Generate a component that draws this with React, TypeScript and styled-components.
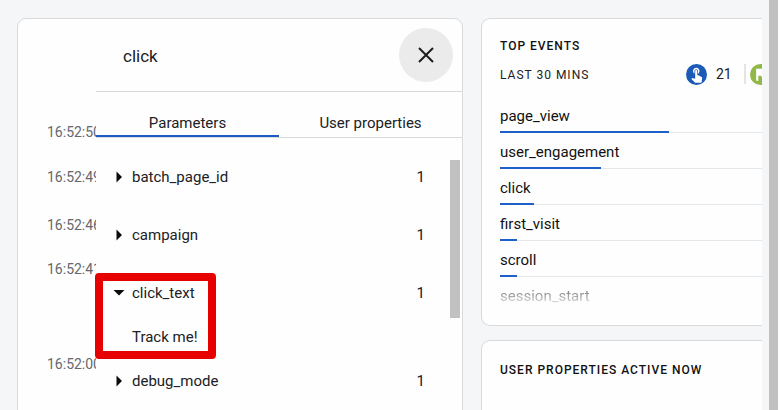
import React from "react";
import styled, { createGlobalStyle, css } from "styled-components";

const GlobalStyle = createGlobalStyle`
  *, *::before, *::after { box-sizing: border-box; }
  body {
    margin: 0;
    background: #f5f6f8;
    color: #202124;
    font-family: Roboto, "Liberation Sans", sans-serif;
    font-size: 14px;
    line-height: 20px;
  }
  button { font: inherit; color: inherit; background: none; border: 0; padding: 0; cursor: pointer; }
  h2, h3, p, ul, ol { margin: 0; padding: 0; font: inherit; list-style: none; }
`;

const Page = styled.div`
  display: flex;
  height: 100vh;
  overflow: hidden;
`;

const Columns = styled.main`
  flex: 1;
  min-width: 0;
  display: grid;
  grid-template-columns: 446fr 281fr;
  gap: 18px;
  padding: 18px 7px 0 17px;
`;

const PageScrollbar = styled.div`
  flex: none;
  width: 11px;
  background: #fdfdfd;
  border-left: 9px solid #c0c0c0;
`;

const Card = styled.section`
  background: #fefefe;
  border: 1px solid #d9dadc;
  border-radius: 9px;
`;

const StreamCard = styled(Card)`
  display: flex;
  min-width: 0;
  height: 100vh;
`;

const Timeline = styled.ol`
  flex: none;
  width: 78px;
  padding: 103px 0 0 29px;
  overflow: hidden;
  display: grid;
  grid-template-rows: 45px 48px 44px 95px 44px;
  align-content: start;
  color: #65686c;
  white-space: nowrap;
`;

const Drawer = styled.div`
  flex: 1;
  min-width: 0;
`;

const DrawerHeader = styled.header`
  display: flex;
  align-items: center;
  justify-content: space-between;
  height: 73px;
  padding: 0 9px 0 27px;
  border-bottom: 1px solid #d9dadc;
`;

const DrawerTitle = styled.h2`
  padding-top: 2px;
  font-size: 17px;
  line-height: 24px;
`;

const CloseButton = styled.button`
  display: grid;
  place-items: center;
  width: 54px;
  height: 54px;
  border-radius: 50%;
  background: #ebebeb;
`;

const Tabs = styled.div`
  display: grid;
  grid-template-columns: 1fr 1fr;
  height: 46px;
  border-bottom: 1px solid #d9dadc;
`;

const Tab = styled.button<{ $active?: boolean }>`
  height: 45px;
  padding-top: 18px;
  font-size: 15px;
  border-bottom: 2px solid transparent;
  ${(p) => p.$active && css`border-bottom-color: #1c5ac4;`}
`;

const DrawerBody = styled.div`
  display: flex;
  align-items: flex-start;
`;

const ParamList = styled.ul`
  flex: 1;
  padding-top: 10px;
  font-size: 15px;
`;

const Param = styled.li`
  position: relative;
`;

const ParamRow = styled.button`
  display: flex;
  align-items: center;
  width: 100%;
  height: 58px;
  padding: 0 25px 0 17px;
  text-align: left;
`;

const ParamName = styled.span`
  flex: 1;
  padding-left: 7px;
`;

const ParamValue = styled.p`
  padding: 5px 0 5px 36px;
`;

const Highlight = styled.div`
  position: absolute;
  left: -1px;
  top: 9px;
  width: 121px;
  height: 86px;
  border: 8px solid #e60000;
  border-radius: 4px;
  pointer-events: none;
`;

const DrawerScrollbar = styled.div`
  flex: none;
  width: 10px;
  height: 158px;
  margin: 22px 2px 0 0;
  background: #c1c1c1;
`;

const SideColumn = styled.div`
  display: flex;
  flex-direction: column;
  gap: 14px;
  min-width: 0;
  height: 100vh;
  overflow: hidden;
`;

const SideCard = styled(Card)`
  flex: none;
  border-right: 0;
  border-radius: 9px 0 0 9px;
  padding: 17px 0 0 18px;
  overflow: hidden;
`;

const EventsCard = styled(SideCard)`
  padding-bottom: 12px;
`;

const PropertiesCard = styled(SideCard)`
  flex: 1;
  padding-top: 19px;
`;

const CardTitle = styled.h3`
  font-size: 12px;
  font-weight: 500;
  letter-spacing: 1px;
  color: #111;
`;

const Summary = styled.div`
  display: flex;
  align-items: center;
  height: 20px;
  margin-top: 8px;
  white-space: nowrap;
`;

const SummaryLabel = styled.p`
  flex: 0 0 186px;
  padding-top: 2px;
  font-size: 12px;
  letter-spacing: 1px;
`;

const SummaryCount = styled.span`
  padding: 0 12px 0 9px;
  border-right: 2px solid #e3e4e6;
  margin-right: 4px;
`;

const Badge = styled.svg`
  flex: none;
  width: 21px;
  height: 21px;
`;

const EventList = styled.ul`
  width: 355px;
  padding-top: 13px;
  font-size: 15px;
  color: #111;
`;

const EventRow = styled.li<{ $faded?: boolean }>`
  height: 36px;
  padding-top: 9px;
  ${(p) =>
    p.$faded &&
    css`
      color: transparent;
      background: linear-gradient(#777 12px, #aaa 20px, #f0f0f0 28px);
      background-clip: text;
    `}
`;

const EventTrack = styled.div`
  height: 2px;
  margin-top: 5px;
  background: linear-gradient(transparent 1px, #e6e7e9 1px);
`;

const EventBar = styled.div`
  height: 2px;
  background: #1f5fc9;
`;

const times = ["16:52:50", "16:52:49", "16:52:46", "16:52:41", "16:52:00"];

const params: { name: string; count: number; value?: string }[] = [
  { name: "batch_page_id", count: 1 },
  { name: "campaign", count: 1 },
  { name: "click_text", count: 1, value: "Track me!" },
  { name: "debug_mode", count: 1 },
];

const events = [
  { name: "page_view", count: 10 },
  { name: "user_engagement", count: 6 },
  { name: "click", count: 2 },
  { name: "first_visit", count: 1 },
  { name: "scroll", count: 1 },
];
const totalEvents = 21;

const Arrow = ({ open }: { open: boolean }) => (
  <svg width="12" height="12" viewBox="0 0 12 12" aria-hidden="true">
    <path d={open ? "M0.5 3h11L6 8.500Z" : "M3.500 0.500v11L9 6Z"} fill="#0c0c0c" />
  </svg>
);

export default function App() {
  return (
    <>
      <GlobalStyle />
      <Page>
        <Columns>
          <StreamCard>
            <Timeline>
              {times.map((t) => (
                <li key={t}>{t}</li>
              ))}
            </Timeline>
            <Drawer>
              <DrawerHeader>
                <DrawerTitle>click</DrawerTitle>
                <CloseButton aria-label="Close">
                  <svg width="16" height="16" viewBox="0 0 16 16" aria-hidden="true">
                    <path d="M1 1l14 14M15 1L1 15" stroke="#1d1d1d" strokeWidth="2" />
                  </svg>
                </CloseButton>
              </DrawerHeader>
              <Tabs role="tablist">
                <Tab role="tab" aria-selected="true" $active>Parameters</Tab>
                <Tab role="tab" aria-selected="false">User properties</Tab>
              </Tabs>
              <DrawerBody>
                <ParamList>
                  {params.map((p) => (
                    <Param key={p.name}>
                      <ParamRow aria-expanded={!!p.value}>
                        <Arrow open={!!p.value} />
                        <ParamName>{p.name}</ParamName>
                        <span>{p.count}</span>
                      </ParamRow>
                      {p.value && <ParamValue>{p.value}</ParamValue>}
                      {p.value && <Highlight />}
                    </Param>
                  ))}
                </ParamList>
                <DrawerScrollbar />
              </DrawerBody>
            </Drawer>
          </StreamCard>
          <SideColumn>
            <EventsCard>
              <CardTitle>TOP EVENTS</CardTitle>
              <Summary>
                <SummaryLabel>LAST 30 MINS</SummaryLabel>
                <Badge viewBox="0 0 24 24" role="img" aria-label="Events">
                  <circle cx="12" cy="12" r="12" fill="#1c5ab8" />
                  <g transform="translate(2.300 1.800) scale(0.820)" fill="#fff">
                    <path d="M9 11.240V7.500C9 6.120 10.120 5 11.500 5S14 6.120 14 7.500v3.740c1.210-.810 2-2.180 2-3.740C16 5.010 13.990 3 11.500 3S7 5.010 7 7.500c0 1.560.790 2.930 2 3.740zm9.840 4.630l-4.540-2.260c-.170-.070-.350-.110-.540-.110H13v-6c0-.830-.670-1.500-1.500-1.500S10 6.670 10 7.500v10.740l-3.430-.720c-.080-.010-.150-.030-.240-.030-.310 0-.590.130-.790.330l-.790.800 4.940 4.940c.270.270.650.440 1.060.440h6.790c.750 0 1.330-.550 1.440-1.280l.750-5.270c.010-.070.020-.140.020-.200 0-.620-.380-1.160-.910-1.380z" />
                  </g>
                </Badge>
                <SummaryCount>21</SummaryCount>
                <Badge viewBox="0 0 24 24" role="img" aria-label="Conversions">
                  <circle cx="12" cy="12" r="12" fill="#93b84a" />
                  <path d="M7 5.500h7l.6 2H19v8h-5.500l-.6-2H9.500V19H7z" fill="#fff" />
                </Badge>
              </Summary>
              <EventList>
                {events.map((e) => (
                  <EventRow key={e.name}>
                    {e.name}
                    <EventTrack>
                      <EventBar style={{ width: `${(e.count / totalEvents) * 100}%` }} />
                    </EventTrack>
                  </EventRow>
                ))}
                <EventRow $faded>session_start</EventRow>
              </EventList>
            </EventsCard>
            <PropertiesCard>
              <CardTitle>USER PROPERTIES ACTIVE NOW</CardTitle>
            </PropertiesCard>
          </SideColumn>
        </Columns>
        <PageScrollbar />
      </Page>
    </>
  );
}
